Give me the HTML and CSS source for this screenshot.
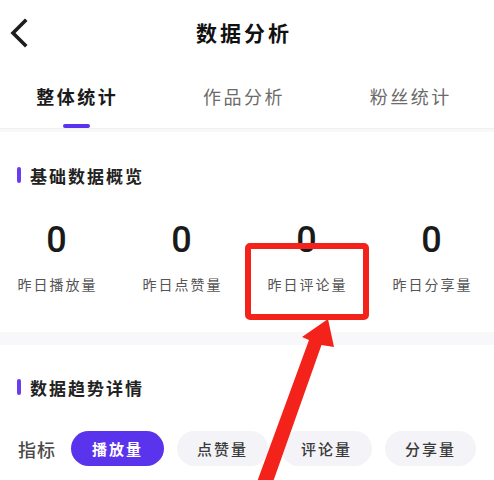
FILE: index.html
```html
<!DOCTYPE html>
<html lang="zh-CN">
<head>
<meta charset="UTF-8">
<meta name="viewport" content="width=device-width, initial-scale=1.0">
<title>数据分析</title>
<link rel="stylesheet" href="styles.css">
</head>
<body>
    <div class="page">
        <div class="top">
            <div class="nav-bar">
                <svg class="back-icon" width="24" height="32" viewBox="0 0 24 32">
                    <path d="M17 4 L5 16 L17 28" fill="none" stroke="#1d1d1d" stroke-width="3.6" stroke-linecap="square"/>
                </svg>
                <div class="nav-title">数据分析</div>
            </div>
            <div class="tabs">
                <div class="tab active">整体统计</div>
                <div class="tab">作品分析</div>
                <div class="tab">粉丝统计</div>
            </div>
        </div>

        <div class="section">
            <div class="section-title">基础数据概览</div>
            <div class="stats">
                <div class="stat">
                    <div class="stat-num">0</div>
                    <div class="stat-label">昨日播放量</div>
                </div>
                <div class="stat">
                    <div class="stat-num">0</div>
                    <div class="stat-label">昨日点赞量</div>
                </div>
                <div class="stat">
                    <div class="stat-num">0</div>
                    <div class="stat-label">昨日评论量</div>
                </div>
                <div class="stat">
                    <div class="stat-num">0</div>
                    <div class="stat-label">昨日分享量</div>
                </div>
            </div>
        </div>

        <div class="section trend">
            <div class="section-title">数据趋势详情</div>
            <div class="metric-row">
                <span class="metric-label">指标</span>
                <span class="chip selected">播放量</span>
                <span class="chip">点赞量</span>
                <span class="chip">评论量</span>
                <span class="chip">分享量</span>
            </div>
        </div>
    </div>

    <!-- red markup drawn on top of the page -->
    <div class="mark-box"></div>
    <svg class="mark-arrow" width="494" height="480" viewBox="0 0 494 480">
        <polygon points="328,319 334,347 321.5,345 273,482 257,482 309,340 302,337" fill="#f3231b"/>
    </svg>
</body>
</html>
```

FILE: styles.css
```css
body {
    margin: 0;
    padding: 0;
    background: #f8f8fa;
    font-family: "Noto Sans CJK SC", "Noto Sans", sans-serif;
    color: #222;
    overflow: hidden;
}

.page {
    width: 500px;
    margin-left: -6px;
}

.top {
    background: #fff;
}

.nav-bar {
    height: 64px;
    display: flex;
    align-items: center;
    justify-content: center;
    position: relative;
}

.back-icon {
    position: absolute;
    left: 14px;
    top: 17px;
}

.nav-title {
    font-size: 21px;
    font-weight: 700;
    letter-spacing: 3px;
    color: #111;
}

.tabs {
    height: 64px;
    display: grid;
    grid-template-columns: repeat(3, 1fr);
    border-bottom: 1px solid #f0f0f2;
}

.tab {
    display: flex;
    justify-content: center;
    align-items: center;
    font-size: 18px;
    letter-spacing: 2.5px;
    color: #6b6b6b;
    position: relative;
}

.tab.active {
    color: #1a1a1a;
    font-weight: 700;
}

.tab.active::after {
    content: "";
    position: absolute;
    bottom: 0;
    left: 50%;
    width: 27px;
    height: 4px;
    margin-left: -14px;
    border-radius: 2px;
    background: #5a33ec;
}

.section {
    background: #fff;
    margin-top: 3px;
    padding: 31px 0 38px;
}

.section.trend {
    margin-top: 13px;
    padding: 30px 0 20px;
}

.section-title {
    display: flex;
    align-items: center;
    height: 24px;
    padding-left: 23px;
    font-size: 17px;
    font-weight: 700;
    letter-spacing: 2px;
    color: #222;
}

.section-title::before {
    content: "";
    width: 4px;
    height: 16px;
    border-radius: 2px;
    background: #6a3df0;
    margin-right: 9px;
}

.stats {
    display: grid;
    grid-template-columns: repeat(4, 1fr);
    margin-top: 33px;
}

.stat {
    display: flex;
    flex-direction: column;
    align-items: center;
}

.stat-num {
    font-family: Roboto, "Noto Sans", sans-serif;
    font-size: 36px;
    font-weight: 500;
    line-height: 40px;
    color: #1a1a1a;
}

.stat-label {
    margin-top: 14px;
    font-size: 14px;
    line-height: 20px;
    letter-spacing: 2px;
    color: #555;
    padding-left: 2px;
}

.metric-row {
    display: flex;
    align-items: center;
    margin-top: 32px;
    padding-left: 24px;
}

.metric-label {
    font-size: 18px;
    font-weight: 500;
    color: #4a4a4a;
    letter-spacing: 1px;
    margin-right: 15px;
}

.chip {
    width: 91px;
    height: 35px;
    border-radius: 18px;
    display: flex;
    justify-content: center;
    align-items: center;
    margin-right: 13px;
    font-size: 15px;
    font-weight: 500;
    letter-spacing: 2px;
    background: #f3f3f8;
    color: #3a3a3a;
}

.chip.selected {
    width: 93px;
    background: #5a33ec;
    color: #fff;
    font-weight: 700;
}

.mark-box {
    position: absolute;
    left: 245px;
    top: 243px;
    width: 112px;
    height: 65px;
    border: 6px solid #f3231b;
    border-radius: 5px;
}

.mark-arrow {
    position: absolute;
    left: 0;
    top: 0;
}
```
